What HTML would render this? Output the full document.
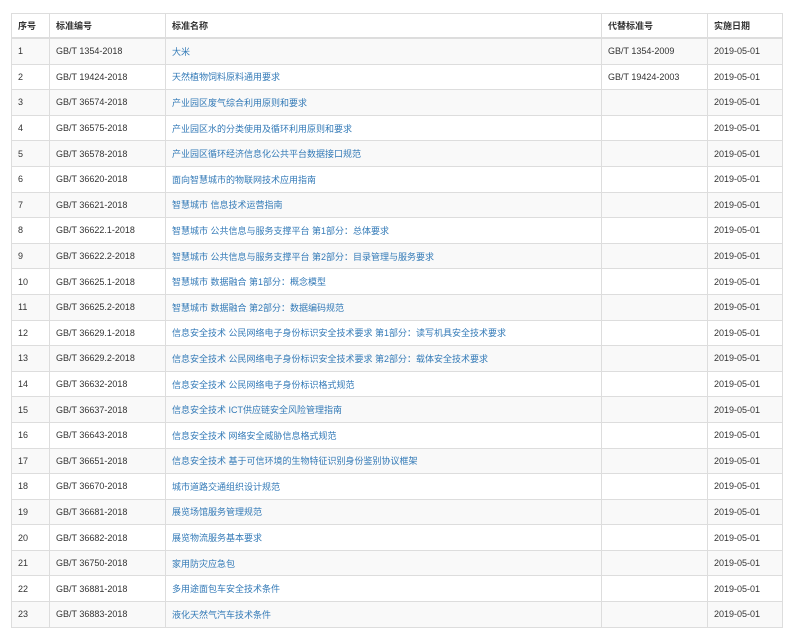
<!DOCTYPE html>
<html><head><meta charset="utf-8"><style>
body{margin:0;background:#fff;font-family:"Liberation Sans","Noto Sans CJK SC",sans-serif;font-size:9px;color:#333}
table{position:absolute;left:11px;top:13px;border-collapse:collapse;width:771px;table-layout:fixed}
td,th{border:1px solid #ddd;padding:0 6px;text-align:left;vertical-align:middle;white-space:nowrap;overflow:hidden}
th{height:23px;font-weight:bold;border-bottom:2px solid #ddd}
td{height:24.6px}
tbody tr:nth-child(odd){background:#f9f9f9}
a{color:#337ab7;text-decoration:none}
</style></head><body>
<table>
<colgroup><col style="width:38px"><col style="width:116px"><col style="width:436px"><col style="width:106px"><col style="width:75px"></colgroup>
<thead><tr><th>序号</th><th>标准编号</th><th>标准名称</th><th>代替标准号</th><th>实施日期</th></tr></thead>
<tbody>
<tr><td>1</td><td>GB/T 1354-2018</td><td><a>大米</a></td><td>GB/T 1354-2009</td><td>2019-05-01</td></tr>
<tr><td>2</td><td>GB/T 19424-2018</td><td><a>天然植物饲料原料通用要求</a></td><td>GB/T 19424-2003</td><td>2019-05-01</td></tr>
<tr><td>3</td><td>GB/T 36574-2018</td><td><a>产业园区废气综合利用原则和要求</a></td><td></td><td>2019-05-01</td></tr>
<tr><td>4</td><td>GB/T 36575-2018</td><td><a>产业园区水的分类使用及循环利用原则和要求</a></td><td></td><td>2019-05-01</td></tr>
<tr><td>5</td><td>GB/T 36578-2018</td><td><a>产业园区循环经济信息化公共平台数据接口规范</a></td><td></td><td>2019-05-01</td></tr>
<tr><td>6</td><td>GB/T 36620-2018</td><td><a>面向智慧城市的物联网技术应用指南</a></td><td></td><td>2019-05-01</td></tr>
<tr><td>7</td><td>GB/T 36621-2018</td><td><a>智慧城市 信息技术运营指南</a></td><td></td><td>2019-05-01</td></tr>
<tr><td>8</td><td>GB/T 36622.1-2018</td><td><a>智慧城市 公共信息与服务支撑平台 第1部分：总体要求</a></td><td></td><td>2019-05-01</td></tr>
<tr><td>9</td><td>GB/T 36622.2-2018</td><td><a>智慧城市 公共信息与服务支撑平台 第2部分：目录管理与服务要求</a></td><td></td><td>2019-05-01</td></tr>
<tr><td>10</td><td>GB/T 36625.1-2018</td><td><a>智慧城市 数据融合 第1部分：概念模型</a></td><td></td><td>2019-05-01</td></tr>
<tr><td>11</td><td>GB/T 36625.2-2018</td><td><a>智慧城市 数据融合 第2部分：数据编码规范</a></td><td></td><td>2019-05-01</td></tr>
<tr><td>12</td><td>GB/T 36629.1-2018</td><td><a>信息安全技术 公民网络电子身份标识安全技术要求 第1部分：读写机具安全技术要求</a></td><td></td><td>2019-05-01</td></tr>
<tr><td>13</td><td>GB/T 36629.2-2018</td><td><a>信息安全技术 公民网络电子身份标识安全技术要求 第2部分：载体安全技术要求</a></td><td></td><td>2019-05-01</td></tr>
<tr><td>14</td><td>GB/T 36632-2018</td><td><a>信息安全技术 公民网络电子身份标识格式规范</a></td><td></td><td>2019-05-01</td></tr>
<tr><td>15</td><td>GB/T 36637-2018</td><td><a>信息安全技术 ICT供应链安全风险管理指南</a></td><td></td><td>2019-05-01</td></tr>
<tr><td>16</td><td>GB/T 36643-2018</td><td><a>信息安全技术 网络安全威胁信息格式规范</a></td><td></td><td>2019-05-01</td></tr>
<tr><td>17</td><td>GB/T 36651-2018</td><td><a>信息安全技术 基于可信环境的生物特征识别身份鉴别协议框架</a></td><td></td><td>2019-05-01</td></tr>
<tr><td>18</td><td>GB/T 36670-2018</td><td><a>城市道路交通组织设计规范</a></td><td></td><td>2019-05-01</td></tr>
<tr><td>19</td><td>GB/T 36681-2018</td><td><a>展览场馆服务管理规范</a></td><td></td><td>2019-05-01</td></tr>
<tr><td>20</td><td>GB/T 36682-2018</td><td><a>展览物流服务基本要求</a></td><td></td><td>2019-05-01</td></tr>
<tr><td>21</td><td>GB/T 36750-2018</td><td><a>家用防灾应急包</a></td><td></td><td>2019-05-01</td></tr>
<tr><td>22</td><td>GB/T 36881-2018</td><td><a>多用途面包车安全技术条件</a></td><td></td><td>2019-05-01</td></tr>
<tr><td>23</td><td>GB/T 36883-2018</td><td><a>液化天然气汽车技术条件</a></td><td></td><td>2019-05-01</td></tr>
</tbody></table>
</body></html>
